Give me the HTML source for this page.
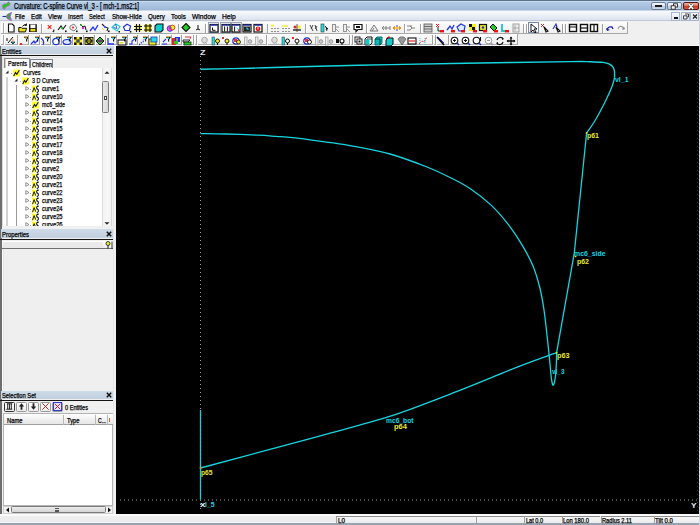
<!DOCTYPE html><html><head><meta charset="utf-8"><style>
*{box-sizing:border-box}
html,body{margin:0;padding:0;width:700px;height:525px;overflow:hidden;background:#f0f0f0;font-family:"Liberation Sans",sans-serif;position:relative}
.a{position:absolute}
.t{position:absolute;white-space:nowrap;transform-origin:0 0}
</style></head><body>
<div class="a" style="left:0px;top:0px;width:700px;height:11px;background:linear-gradient(#5e7088 0,#5e7088 1px,#cfe6f6 1px,#b4cbe6 2.5px,#9db7d6 10px,#cad8ea 10px,#cad8ea 11px)"></div>
<svg class="a" style="left:1px;top:1px;" width="10" height="9" viewBox="0 0 10 9"><path d="M1,4.5 L3.5,2.5 L5,3 L7.5,0.8 L9.3,2.5 L8,5 L5.5,5.5 L3.5,8.5 L1.8,7.5 Z" fill="#1ec81e" stroke="#d070d0" stroke-width="0.9"/></svg>
<div class="t" style="left:13.5px;top:2.1px;font-size:8.2px;line-height:9px;color:#000;font-weight:normal;transform:scaleX(0.721);-webkit-text-stroke:0.25px #000;">Curvature: C-spline Curve vl_3 - [ mch-1.ms2:1]</div>
<div class="a" style="left:651px;top:2px;width:15px;height:8px;border:1px solid #6d7f96;border-radius:2px;background:linear-gradient(#f4f8fc,#dce6f2 45%,#b8cae0 50%,#c8d8ec)"></div>
<div class="a" style="left:655px;top:4.8px;width:7px;height:2.6px;background:#fff;border:0.9px solid #1a1a1a"></div>
<div class="a" style="left:667px;top:2px;width:15px;height:8px;border:1px solid #6d7f96;border-radius:2px;background:linear-gradient(#f4f8fc,#dce6f2 45%,#b8cae0 50%,#c8d8ec)"></div>
<svg class="a" style="left:670px;top:2.5px;" width="9" height="7" viewBox="0 0 9 7"><rect x="3.5" y="0.8" width="4" height="3.2" fill="#fff" stroke="#222" stroke-width="0.9"/><rect x="1.2" y="2.8" width="4" height="3.4" fill="#fff" stroke="#222" stroke-width="0.9"/></svg>
<div class="a" style="left:683px;top:2px;width:16px;height:8px;border:1px solid #5b1a12;border-radius:2px;background:linear-gradient(#f4b8a8,#e07058 45%,#c83a22 50%,#d85a3a)"></div>
<svg class="a" style="left:686px;top:3px" width="10" height="7" viewBox="0 0 10 7"><path d="M2.8,1 L7.2,6 M7.2,1 L2.8,6" stroke="#333" stroke-width="2.6"/><path d="M2.8,1 L7.2,6 M7.2,1 L2.8,6" stroke="#fff" stroke-width="1.5"/></svg>
<div class="a" style="left:0px;top:11px;width:700px;height:10px;background:linear-gradient(#f8fafd,#eef2f8 40%,#dce3ef);border-bottom:1px solid #c0c8d6"></div>
<svg class="a" style="left:2px;top:11.5px;" width="11" height="9" viewBox="0 0 11 9"><path d="M9.5,0.5 Q4,2.5 4.2,4.5 Q4,6.8 9.5,8.5 Q6.8,4.5 9.5,0.5 Z" fill="#22c022" stroke="#b050d0" stroke-width="0.9"/><path d="M0.5,4.5 L4,4.5" stroke="#2233aa" stroke-width="1.1"/><circle cx="6.5" cy="4.5" r="0.9" fill="#c040c0"/></svg>
<div class="t" style="left:15px;top:12.6px;font-size:7.2px;line-height:8px;color:#000;font-weight:normal;transform:scaleX(0.845);-webkit-text-stroke:0.25px #000;">File</div>
<div class="t" style="left:31px;top:12.6px;font-size:7.2px;line-height:8px;color:#000;font-weight:normal;transform:scaleX(0.872);-webkit-text-stroke:0.25px #000;">Edit</div>
<div class="t" style="left:48px;top:12.6px;font-size:7.2px;line-height:8px;color:#000;font-weight:normal;transform:scaleX(0.893);-webkit-text-stroke:0.25px #000;">View</div>
<div class="t" style="left:68px;top:12.6px;font-size:7.2px;line-height:8px;color:#000;font-weight:normal;transform:scaleX(0.823);-webkit-text-stroke:0.25px #000;">Insert</div>
<div class="t" style="left:89px;top:12.6px;font-size:7.2px;line-height:8px;color:#000;font-weight:normal;transform:scaleX(0.791);-webkit-text-stroke:0.25px #000;">Select</div>
<div class="t" style="left:112px;top:12.6px;font-size:7.2px;line-height:8px;color:#000;font-weight:normal;transform:scaleX(0.848);-webkit-text-stroke:0.25px #000;">Show-Hide</div>
<div class="t" style="left:148px;top:12.6px;font-size:7.2px;line-height:8px;color:#000;font-weight:normal;transform:scaleX(0.858);-webkit-text-stroke:0.25px #000;">Query</div>
<div class="t" style="left:171px;top:12.6px;font-size:7.2px;line-height:8px;color:#000;font-weight:normal;transform:scaleX(0.882);-webkit-text-stroke:0.25px #000;">Tools</div>
<div class="t" style="left:192px;top:12.6px;font-size:7.2px;line-height:8px;color:#000;font-weight:normal;transform:scaleX(0.930);-webkit-text-stroke:0.25px #000;">Window</div>
<div class="t" style="left:222px;top:12.6px;font-size:7.2px;line-height:8px;color:#000;font-weight:normal;transform:scaleX(0.933);-webkit-text-stroke:0.25px #000;">Help</div>
<div class="a" style="left:671px;top:12px;width:9px;height:9px;border:1px solid #a9b6c8;background:linear-gradient(#f6f8fb,#dfe6ef)"></div>
<div class="a" style="left:681px;top:12px;width:9px;height:9px;border:1px solid #a9b6c8;background:linear-gradient(#f6f8fb,#dfe6ef)"></div>
<div class="a" style="left:690px;top:12px;width:9px;height:9px;border:1px solid #a9b6c8;background:linear-gradient(#f6f8fb,#dfe6ef)"></div>
<div class="a" style="left:674px;top:17px;width:4px;height:1.5px;background:#111"></div>
<svg class="a" style="left:682px;top:13px;" width="8" height="7" viewBox="0 0 8 7"><path d="M3,1 h3.5 v3 h-1 M1.5,2.8 h3.5 v3.2 h-3.5 z" fill="none" stroke="#333" stroke-width="0.9"/></svg>
<svg class="a" style="left:691px;top:13px;" width="8" height="7" viewBox="0 0 8 7"><path d="M2,1.5 L6,5.5 M6,1.5 L2,5.5" stroke="#222" stroke-width="1.3"/></svg>
<div class="a" style="left:0px;top:21px;width:700px;height:25px;background:#f0f0f0"></div>
<div class="a" style="left:1px;top:21.5px;width:627px;height:12px;background:linear-gradient(#fbfbfb,#f1f1f1);border-right:1px solid #a8a8a8;border-bottom:1px solid #a8a8a8;box-shadow:inset 1px 1px 0 #fff"></div>
<div class="a" style="left:1px;top:33.5px;width:517px;height:11.8px;background:linear-gradient(#fbfbfb,#f1f1f1);border-right:1px solid #a8a8a8;border-bottom:1px solid #b0b0b0;box-shadow:inset 1px 1px 0 #fff"></div>
<div class="a" style="left:0px;top:45.3px;width:700px;height:1px;background:#fafafa"></div>
<div class="a" style="left:2.5px;top:23px;width:1.2px;height:9.5px;background:#a8a8a8;box-shadow:1px 0 0 #fff"></div>
<div class="a" style="left:2.5px;top:35px;width:1.2px;height:9.5px;background:#a8a8a8;box-shadow:1px 0 0 #fff"></div>
<div class="a" style="left:207.5px;top:22.3px;width:11px;height:10.6px;border:1px solid #9aa6b8;background:rgba(255,255,255,0.35)"></div>
<div class="a" style="left:219.5px;top:22.3px;width:11px;height:10.6px;border:1px solid #9aa6b8;background:rgba(255,255,255,0.35)"></div>
<div class="a" style="left:230.5px;top:22.3px;width:11px;height:10.6px;border:1px solid #9aa6b8;background:rgba(255,255,255,0.35)"></div>
<div class="a" style="left:528px;top:22.3px;width:11px;height:10.6px;border:1px solid #7a8aa0;background:rgba(255,255,255,0.3)"></div>
<svg class="a" style="left:7px;top:23px;" width="10" height="10" viewBox="0 0 10 10"><path d="M1.5,1 h3.8 l1.8,1.8 v6.2 h-5.6 z" fill="#fff" stroke="#111" stroke-width="1.1"/></svg>
<svg class="a" style="left:17.5px;top:23px;" width="10" height="10" viewBox="0 0 10 10"><path d="M0.8,4.5 h2.5 l0.8,0.8 h4.5 l-1.2,3.6 h-6.6 z" fill="#f0e020" stroke="#111" stroke-width="1"/><path d="M4.5,3.5 q1.5,-2.5 4,-2" stroke="#111" fill="none" stroke-width="1"/><path d="M8.5,0.5 v2 h-2" stroke="#111" fill="none" stroke-width="0.9"/></svg>
<svg class="a" style="left:28px;top:23px;" width="10" height="10" viewBox="0 0 10 10"><rect x="1" y="1.2" width="7.8" height="7.8" fill="#111"/><rect x="2.4" y="1.6" width="5" height="3.4" fill="#fff"/><rect x="2.4" y="5.8" width="5" height="2.6" fill="#e8d820"/></svg>
<div class="a" style="left:41px;top:23.5px;width:1px;height:9px;background:#a0a0a0;box-shadow:1px 0 0 #fff"></div>
<svg class="a" style="left:46.5px;top:23px;" width="10" height="10" viewBox="0 0 10 10"><path d="M0.8,2.2 l3.6,3.6 M4.4,2.2 l-3.6,3.6" stroke="#e22" stroke-width="1.1"/><path d="M6.8,6.5 v1.5 l-1,1" stroke="#111" stroke-width="1.1" fill="none"/></svg>
<svg class="a" style="left:57px;top:23px;" width="10" height="10" viewBox="0 0 10 10"><path d="M1,7 l3,-4 l2,3 l3,-4" stroke="#111" fill="none" stroke-width="1.1"/><circle cx="5" cy="5" r="1.2" fill="#2c2"/><rect x="8" y="7.5" width="1.6" height="1.6" fill="#111"/></svg>
<svg class="a" style="left:67.5px;top:23px;" width="10" height="10" viewBox="0 0 10 10"><path d="M2,3 l4,-2 l3,4 l-3,3 l-4,-2 z" fill="#eee" stroke="#777" stroke-width="0.9"/><circle cx="5" cy="4.5" r="1.1" fill="#e33"/><rect x="8" y="7.5" width="1.6" height="1.6" fill="#111"/></svg>
<svg class="a" style="left:78px;top:23px;" width="10" height="10" viewBox="0 0 10 10"><path d="M2,1 l3,3 l2,-1 l1,4" stroke="#111" fill="none" stroke-width="1"/><circle cx="5" cy="5" r="1.2" fill="#d2d"/><circle cx="3" cy="2" r="0.9" fill="#2b2"/><rect x="8" y="7.5" width="1.6" height="1.6" fill="#111"/></svg>
<svg class="a" style="left:88.5px;top:23px;" width="10" height="10" viewBox="0 0 10 10"><path d="M1,8 l3,-4 l2,3 l3,-5" stroke="#23e" fill="none" stroke-width="1.3"/></svg>
<svg class="a" style="left:99.5px;top:23px;" width="10" height="10" viewBox="0 0 10 10"><path d="M2,1 l3,3 l3,1 l-1,3" stroke="#223" fill="none" stroke-width="1.1"/><circle cx="5" cy="4" r="1.1" fill="#36f"/><path d="M2,5 l2,2" stroke="#dd2" stroke-width="1"/><rect x="8" y="7.5" width="1.6" height="1.6" fill="#111"/></svg>
<svg class="a" style="left:110.5px;top:23px;" width="10" height="10" viewBox="0 0 10 10"><path d="M1,4.5 L4.5,1 L9,3.5 L6,8 Z" fill="#fff" stroke="#1cc" stroke-width="1.1"/><path d="M2.5,4.5 L6,5.5 L4.5,1" stroke="#23c" stroke-width="0.8" fill="none"/><rect x="7.5" y="8" width="1.5" height="1.5" fill="#111"/></svg>
<svg class="a" style="left:122px;top:23px;" width="10" height="10" viewBox="0 0 10 10"><path d="M1.5,4 L5,1.2 L8.5,3 L7.5,7.5 L3,7.5 Z" fill="#fff" stroke="#23c" stroke-width="1.2"/><rect x="7.8" y="8" width="1.5" height="1.5" fill="#111"/></svg>
<svg class="a" style="left:132.5px;top:23px;" width="10" height="10" viewBox="0 0 10 10"><path d="M2,2 h6 v6 h-6 z" fill="#f0e820"/><path d="M1,3.5 h8 M1,6.5 h8 M3.5,1 v8 M6.5,1 v8" stroke="#111" stroke-width="1.1"/></svg>
<svg class="a" style="left:143px;top:23px;" width="10" height="10" viewBox="0 0 10 10"><rect x="1.5" y="1.5" width="7" height="7" fill="#f0e820"/><path d="M1,3 h8 M1,7 h8 M3,1 v8 M7,1 v8" stroke="#111" stroke-width="1.1"/></svg>
<svg class="a" style="left:154px;top:23px;" width="10" height="10" viewBox="0 0 10 10"><path d="M1,3 l2,-2 h6 v6 l-2,2 h-6 z" fill="#1cc" stroke="#111" stroke-width="1.1"/></svg>
<svg class="a" style="left:165.5px;top:23px;" width="10" height="10" viewBox="0 0 10 10"><circle cx="4" cy="5.5" r="2.8" fill="#f4f" stroke="#23c" stroke-width="0.9"/><circle cx="6.5" cy="4.5" r="2.4" fill="#ee2" stroke="#c22" stroke-width="0.8"/><path d="M3,5 h3" stroke="#23c" stroke-width="0.8"/></svg>
<div class="a" style="left:178px;top:23.5px;width:1px;height:9px;background:#a0a0a0;box-shadow:1px 0 0 #fff"></div>
<svg class="a" style="left:180.5px;top:23px;" width="10" height="10" viewBox="0 0 10 10"><path d="M5,0.5 l4,4 l-4,4 l-4,-4 z" fill="#2c2" stroke="#111" stroke-width="1.1"/></svg>
<svg class="a" style="left:193px;top:23px;" width="10" height="10" viewBox="0 0 10 10"><path d="M5,2 v4 l-2,1 M5,6 l2,1" stroke="#111" fill="none" stroke-width="1"/></svg>
<div class="a" style="left:205px;top:23.5px;width:1px;height:9px;background:#a0a0a0;box-shadow:1px 0 0 #fff"></div>
<svg class="a" style="left:208.5px;top:23px;" width="10" height="10" viewBox="0 0 10 10"><rect x="1" y="1.5" width="8" height="7.5" fill="#fff" stroke="#111" stroke-width="1.2"/><rect x="1.5" y="1.5" width="7" height="1.3" fill="#2a3ab8"/><path d="M3.5,4.5 v2.8 h3" stroke="#111" fill="none" stroke-width="1"/></svg>
<svg class="a" style="left:220.5px;top:23px;" width="10" height="10" viewBox="0 0 10 10"><rect x="1" y="1.5" width="8" height="7.5" fill="#fff" stroke="#111" stroke-width="1.2"/><rect x="1.5" y="1.5" width="7" height="1.3" fill="#2a3ab8"/><path d="M3.6,3.5 v5 M6.4,3.5 v5" stroke="#111" stroke-width="1"/></svg>
<svg class="a" style="left:231px;top:23px;" width="10" height="10" viewBox="0 0 10 10"><rect x="1" y="1.5" width="8" height="7.5" fill="#fff" stroke="#111" stroke-width="1.2"/><rect x="1.5" y="1.5" width="7" height="1.3" fill="#2a3ab8"/><path d="M3.6,3.5 v5" stroke="#111" stroke-width="1"/><path d="M5,3.5 l3,3 h-1.5 l1,2 z" fill="#1dd"/><rect x="7" y="6.5" width="1.5" height="1.5" fill="#e22"/></svg>
<svg class="a" style="left:242px;top:23px;" width="10" height="10" viewBox="0 0 10 10"><rect x="1" y="1.5" width="8" height="7.5" fill="#fff" stroke="#111" stroke-width="1.2"/><rect x="1.5" y="1.5" width="7" height="1.3" fill="#2a3ab8"/><rect x="2" y="3.5" width="6" height="5" fill="#222"/><path d="M4.5,4 l3,2.5 h-3 z" fill="#2de"/></svg>
<svg class="a" style="left:252.5px;top:23px;" width="10" height="10" viewBox="0 0 10 10"><rect x="1" y="1.5" width="8" height="7.5" fill="#fff" stroke="#111" stroke-width="1.2"/><rect x="1.5" y="1.5" width="7" height="1.3" fill="#2a3ab8"/><circle cx="5" cy="5.8" r="2.4" fill="#e11"/><rect x="4.5" y="4.2" width="1" height="2.2" fill="#fff"/></svg>
<div class="a" style="left:266.5px;top:23.5px;width:1px;height:9px;background:#a0a0a0;box-shadow:1px 0 0 #fff"></div>
<svg class="a" style="left:270px;top:23px;" width="10" height="10" viewBox="0 0 10 10"><path d="M2,2 v1 M2,5 v1 M2,8 v1 M5,5 v1 M5,8 v1 M8,5 v1 M8,8 v1" stroke="#333" stroke-width="1"/><path d="M1,2.5 h3" stroke="#ee2" stroke-width="1.5"/></svg>
<svg class="a" style="left:281px;top:23px;" width="10" height="10" viewBox="0 0 10 10"><path d="M2,5 v1 M2,8 v1 M5,5 v1 M5,8 v1 M8,5 v1 M8,8 v1" stroke="#333" stroke-width="1"/><path d="M1,3 h6" stroke="#ee2" stroke-width="1.3"/></svg>
<svg class="a" style="left:291.5px;top:23px;" width="10" height="10" viewBox="0 0 10 10"><path d="M1,7 h8" stroke="#111" stroke-width="1.3"/><circle cx="3" cy="4" r="1.5" fill="#e22"/><rect x="5.5" y="2.5" width="3" height="3" fill="#ee2"/><path d="M5,1 v8" stroke="#333" stroke-width="0.8"/></svg>
<div class="a" style="left:305px;top:23.5px;width:1px;height:9px;background:#a0a0a0;box-shadow:1px 0 0 #fff"></div>
<svg class="a" style="left:308.5px;top:23px;" width="10" height="10" viewBox="0 0 10 10"><path d="M1,2 l3,6 M4,2 l-2,4 M6,2 l2,6 M8,3 l-2,3" stroke="#333" stroke-width="0.9" fill="none"/></svg>
<svg class="a" style="left:320px;top:23px;" width="10" height="10" viewBox="0 0 10 10"><rect x="1" y="1" width="3" height="8" fill="#2dd" stroke="#333" stroke-width="0.6"/><path d="M5,3 l3,3 l-2,0 l1,2" stroke="#111" fill="#111" stroke-width="0.8"/></svg>
<svg class="a" style="left:331px;top:23px;" width="10" height="10" viewBox="0 0 10 10"><rect x="1.5" y="1.5" width="3" height="7" fill="#eee" stroke="#888" stroke-width="0.9"/><path d="M5,4 h3 M5,6 l3,3" stroke="#888" stroke-width="0.9"/></svg>
<svg class="a" style="left:342px;top:23px;" width="10" height="10" viewBox="0 0 10 10"><rect x="1.5" y="1.5" width="3" height="7" fill="#eee" stroke="#888" stroke-width="0.9"/><path d="M5,4 h3 M5,6 l3,3" stroke="#888" stroke-width="0.9"/></svg>
<svg class="a" style="left:352.5px;top:23px;" width="10" height="10" viewBox="0 0 10 10"><path d="M1,1.5 h8 v5 h-4 l-2,2 v-2 h-2 z" fill="#fff" stroke="#111" stroke-width="1.2"/><rect x="3" y="3" width="4" height="2" fill="#111"/></svg>
<div class="a" style="left:366px;top:23.5px;width:1px;height:9px;background:#a0a0a0;box-shadow:1px 0 0 #fff"></div>
<svg class="a" style="left:369px;top:23px;" width="10" height="10" viewBox="0 0 10 10"><path d="M1,8 l4,-6 l4,6 z" fill="none" stroke="#777" stroke-width="1"/><path d="M3,8 l2,-3" stroke="#777"/></svg>
<svg class="a" style="left:380.5px;top:23px;" width="10" height="10" viewBox="0 0 10 10"><path d="M1,5 h8 M1,5 l2,-2 M1,5 l2,2 M5,3 v4 M9,3 v4" stroke="#777" stroke-width="0.9"/></svg>
<svg class="a" style="left:391.5px;top:23px;" width="10" height="10" viewBox="0 0 10 10"><path d="M1,5 h8" stroke="#e33" stroke-width="1.2"/><path d="M1,5 l2,-2 M1,5 l2,2 M9,5 l-2,-2 M9,5 l-2,2" stroke="#f80" stroke-width="0.9"/><path d="M5,2 v6" stroke="#33c" stroke-width="0.9"/><rect x="3" y="4.2" width="4" height="1.6" fill="#ee2"/></svg>
<div class="a" style="left:404px;top:23.5px;width:1px;height:9px;background:#a0a0a0;box-shadow:1px 0 0 #fff"></div>
<svg class="a" style="left:406px;top:23px;" width="10" height="10" viewBox="0 0 10 10"><path d="M1,3 h3 l2,2 h3 M1,7 h3 l2,-2 M5,2 v2" stroke="#777" stroke-width="0.9" fill="none"/></svg>
<div class="a" style="left:420px;top:23.5px;width:1px;height:9px;background:#a0a0a0;box-shadow:1px 0 0 #fff"></div>
<svg class="a" style="left:423px;top:23px;" width="10" height="10" viewBox="0 0 10 10"><rect x="1" y="1" width="8" height="8" fill="#ccc" stroke="#555" stroke-width="0.8"/><path d="M1,3.5 h8 M1,6 h8" stroke="#555" stroke-width="0.8"/></svg>
<svg class="a" style="left:435px;top:23px;" width="10" height="10" viewBox="0 0 10 10"><path d="M1,1 l3,3 M4,1 l-3,3" stroke="#e11" stroke-width="1"/><path d="M3,4 v4 h2" stroke="#111" stroke-width="0.9" fill="none"/><rect x="5" y="7" width="4" height="2.4" fill="#e11"/></svg>
<svg class="a" style="left:445.5px;top:23px;" width="10" height="10" viewBox="0 0 10 10"><path d="M1,7 l3,-4 l2,3 l2,-4" stroke="#23d" fill="none" stroke-width="1.3"/><rect x="5" y="7" width="4" height="2.4" fill="#e11"/></svg>
<svg class="a" style="left:456px;top:23px;" width="10" height="10" viewBox="0 0 10 10"><path d="M1,4 l4,-3 l4,2 l-1,5 l-5,0 z" fill="#ddeeff" stroke="#23c" stroke-width="1.2"/><rect x="5" y="7" width="4" height="2.4" fill="#e11"/></svg>
<svg class="a" style="left:467.5px;top:23px;" width="10" height="10" viewBox="0 0 10 10"><rect x="1" y="1" width="7" height="7" fill="#ee2"/><path d="M1,1 h3 v3 h-3z M4,4 h3 v3 h-3z" fill="#111"/><rect x="5" y="7" width="4" height="2.4" fill="#e11"/></svg>
<svg class="a" style="left:478px;top:23px;" width="10" height="10" viewBox="0 0 10 10"><rect x="1.5" y="1.5" width="7" height="6" fill="#ee2" stroke="#111" stroke-width="1.2"/><circle cx="5" cy="4.5" r="1.3" fill="#23c"/><rect x="5" y="7" width="4" height="2.4" fill="#e11"/></svg>
<svg class="a" style="left:489px;top:23px;" width="10" height="10" viewBox="0 0 10 10"><path d="M1,4 l3,-3 l4,4 l-3,3 z" fill="#2c2" stroke="#111" stroke-width="1"/><rect x="5" y="7" width="4" height="2.4" fill="#e11"/></svg>
<svg class="a" style="left:500px;top:23px;" width="10" height="10" viewBox="0 0 10 10"><path d="M2,1 v7 h3" stroke="#1cc" stroke-width="1.8" fill="none"/><rect x="5" y="7" width="4" height="2.4" fill="#e11"/></svg>
<svg class="a" style="left:511px;top:23px;" width="10" height="10" viewBox="0 0 10 10"><rect x="2" y="1" width="6" height="8" fill="#eee" stroke="#999" stroke-width="0.9"/><path d="M4,2 v6 M2,5 h6" stroke="#999" stroke-width="0.8"/></svg>
<div class="a" style="left:523px;top:23.5px;width:1px;height:9px;background:#a0a0a0;box-shadow:1px 0 0 #fff"></div>
<div class="a" style="left:526px;top:23.5px;width:1px;height:9px;background:#a0a0a0;box-shadow:1px 0 0 #fff"></div>
<svg class="a" style="left:529px;top:23px;" width="10" height="10" viewBox="0 0 10 10"><path d="M2,1 v8 l2,-2 l2,3 l1,-1 l-2,-3 h3 z" fill="#fff" stroke="#111" stroke-width="1"/></svg>
<svg class="a" style="left:540px;top:23px;" width="10" height="10" viewBox="0 0 10 10"><path d="M1,1 l3,3 M4,1 l-3,3" stroke="#e11" stroke-width="0.9"/><path d="M4,4 l4,4 l-2,1 z" fill="#fff" stroke="#111" stroke-width="1.1"/></svg>
<svg class="a" style="left:551.5px;top:23px;" width="10" height="10" viewBox="0 0 10 10"><path d="M1,6 l3,-5 l1,3" stroke="#23d" fill="none" stroke-width="1.1"/><path d="M4,4 l4,4 l-2,1 z" fill="#fff" stroke="#111" stroke-width="1.1"/></svg>
<div class="a" style="left:561.5px;top:23.5px;width:1px;height:9px;background:#a0a0a0;box-shadow:1px 0 0 #fff"></div>
<div class="a" style="left:565px;top:23.5px;width:1px;height:9px;background:#a0a0a0;box-shadow:1px 0 0 #fff"></div>
<svg class="a" style="left:567.5px;top:23px;" width="10" height="10" viewBox="0 0 10 10"><rect x="1.5" y="1.5" width="7" height="7" fill="#fff" stroke="#111" stroke-width="1.4"/><path d="M1.5,4 h7" stroke="#111"/></svg>
<svg class="a" style="left:578.5px;top:23px;" width="10" height="10" viewBox="0 0 10 10"><rect x="1.5" y="1.5" width="7" height="7" fill="#fff" stroke="#111" stroke-width="1.4"/><path d="M1.5,5 h7" stroke="#111" stroke-width="1.2"/></svg>
<svg class="a" style="left:589px;top:23px;" width="10" height="10" viewBox="0 0 10 10"><rect x="1.5" y="1.5" width="7" height="7" fill="#fff" stroke="#111" stroke-width="1.4"/><path d="M5,1.5 v7" stroke="#111" stroke-width="1.2"/></svg>
<div class="a" style="left:601.5px;top:23.5px;width:1px;height:9px;background:#a0a0a0;box-shadow:1px 0 0 #fff"></div>
<svg class="a" style="left:604.5px;top:23px;" width="10" height="10" viewBox="0 0 10 10"><path d="M2,7 q1,-4 5,-3 l1,2" stroke="#22a" fill="none" stroke-width="1.3"/><path d="M1,5 l1,3 l3,-1 z" fill="#22a"/></svg>
<svg class="a" style="left:615.5px;top:23px;" width="10" height="10" viewBox="0 0 10 10"><path d="M2,6 q1,-4 5,-2 l0,2" stroke="#999" fill="none" stroke-width="1.1"/><path d="M6,7 l3,-1 l-1,-2 z" fill="#777"/></svg>
<svg class="a" style="left:6px;top:35.5px;" width="10" height="10" viewBox="0 0 10 10"><path d="M1,2 v3 M2,7 l5,-6" stroke="#111" stroke-width="1"/><path d="M5,6 h4 l-2,2 z" fill="#1cd" stroke="#111" stroke-width="0.7"/><path d="M6,4 h2" stroke="#f90" stroke-width="1"/></svg>
<div class="a" style="left:16.5px;top:35px;width:1px;height:10px;background:#a0a0a0;box-shadow:1px 0 0 #fff"></div>
<svg class="a" style="left:18.5px;top:35.5px;" width="10" height="10" viewBox="0 0 10 10"><path d="M5,1.2 h4.2 l-1.6,2.2 v2.2" stroke="#111" stroke-width="1.1" fill="none"/><rect x="6.4" y="1.6" width="1.6" height="1.4" fill="#1de"/><path d="M5.5,0.6 h3" stroke="#f90" stroke-width="0.7"/><path d="M1,7 l2,2 M3,7 l-2,2" stroke="#e22" stroke-width="1"/><path d="M6,2 h2" stroke="#f90"/></svg>
<div class="a" style="left:27.5px;top:35px;width:1px;height:10px;background:#a0a0a0;box-shadow:1px 0 0 #fff"></div>
<svg class="a" style="left:29.5px;top:35.5px;" width="10" height="10" viewBox="0 0 10 10"><path d="M1,8 l3,-3 l1,2 l3,-3" stroke="#23e" fill="none" stroke-width="1.2"/><path d="M5,1.2 h4.2 l-1.6,2.2 v2.2" stroke="#111" stroke-width="1.1" fill="none"/><rect x="6.4" y="1.6" width="1.6" height="1.4" fill="#1de"/><path d="M5.5,0.6 h3" stroke="#f90" stroke-width="0.7"/></svg>
<div class="a" style="left:38.6px;top:35px;width:1px;height:10px;background:#a0a0a0;box-shadow:1px 0 0 #fff"></div>
<svg class="a" style="left:40px;top:35.5px;" width="10" height="10" viewBox="0 0 10 10"><path d="M1,2 q4,3 2,7" stroke="#23e" fill="none" stroke-width="1.2"/><path d="M5,1.2 h4.2 l-1.6,2.2 v2.2" stroke="#111" stroke-width="1.1" fill="none"/><rect x="6.4" y="1.6" width="1.6" height="1.4" fill="#1de"/><path d="M5.5,0.6 h3" stroke="#f90" stroke-width="0.7"/><path d="M1,5 l2,2" stroke="#dd4" stroke-width="0.9"/></svg>
<div class="a" style="left:49.5px;top:35px;width:1px;height:10px;background:#a0a0a0;box-shadow:1px 0 0 #fff"></div>
<svg class="a" style="left:50.5px;top:35.5px;" width="10" height="10" viewBox="0 0 10 10"><circle cx="5" cy="5.5" r="3.2" fill="#fff" stroke="#23c" stroke-width="1.3"/><path d="M5,1.2 h4.2 l-1.6,2.2 v2.2" stroke="#111" stroke-width="1.1" fill="none"/><rect x="6.4" y="1.6" width="1.6" height="1.4" fill="#1de"/><path d="M5.5,0.6 h3" stroke="#f90" stroke-width="0.7"/></svg>
<div class="a" style="left:60.5px;top:35px;width:1px;height:10px;background:#a0a0a0;box-shadow:1px 0 0 #fff"></div>
<svg class="a" style="left:61.5px;top:35.5px;" width="10" height="10" viewBox="0 0 10 10"><ellipse cx="5" cy="6" rx="4" ry="2.5" fill="#dbe7ff" stroke="#23c" stroke-width="1.2"/><path d="M5,1.2 h4.2 l-1.6,2.2 v2.2" stroke="#111" stroke-width="1.1" fill="none"/><rect x="6.4" y="1.6" width="1.6" height="1.4" fill="#1de"/><path d="M5.5,0.6 h3" stroke="#f90" stroke-width="0.7"/></svg>
<div class="a" style="left:71.5px;top:35px;width:1px;height:10px;background:#a0a0a0;box-shadow:1px 0 0 #fff"></div>
<svg class="a" style="left:72.5px;top:35.5px;" width="10" height="10" viewBox="0 0 10 10"><rect x="1" y="1" width="8" height="8" fill="#f0e820"/><path d="M1,1 h2.5 v2.5 h-2.5z M6.5,1 h2.5 v2.5 h-2.5z M1,6.5 h2.5 v2.5 h-2.5z M6.5,6.5 h2.5 v2.5 h-2.5z M3.5,3.5 h3 v3 h-3z" fill="#111"/><rect x="4.2" y="4.2" width="1.6" height="1.6" fill="#36f"/></svg>
<div class="a" style="left:82.5px;top:35px;width:1px;height:10px;background:#a0a0a0;box-shadow:1px 0 0 #fff"></div>
<svg class="a" style="left:83.5px;top:35.5px;" width="10" height="10" viewBox="0 0 10 10"><rect x="1" y="1.5" width="8" height="7" fill="#f0e820" stroke="#111" stroke-width="0.9"/><circle cx="5" cy="5" r="2.3" fill="none" stroke="#111" stroke-width="1.2"/><path d="M1,5 h8" stroke="#111" stroke-width="0.9"/></svg>
<div class="a" style="left:93.5px;top:35px;width:1px;height:10px;background:#a0a0a0;box-shadow:1px 0 0 #fff"></div>
<svg class="a" style="left:94.5px;top:35.5px;" width="10" height="10" viewBox="0 0 10 10"><path d="M1,5 l4,-4 l4,4 l-4,4 z" fill="#2c2" stroke="#111" stroke-width="1"/><circle cx="5" cy="5" r="1.5" fill="#d3d"/><path d="M1,5 h8" stroke="#111" stroke-width="0.8"/></svg>
<div class="a" style="left:104.5px;top:35px;width:1px;height:10px;background:#a0a0a0;box-shadow:1px 0 0 #fff"></div>
<svg class="a" style="left:105.5px;top:35.5px;" width="10" height="10" viewBox="0 0 10 10"><path d="M2,2 v6 h6" stroke="#23e" fill="none" stroke-width="1.3"/><path d="M5,1.2 h4.2 l-1.6,2.2 v2.2" stroke="#111" stroke-width="1.1" fill="none"/><rect x="6.4" y="1.6" width="1.6" height="1.4" fill="#1de"/><path d="M5.5,0.6 h3" stroke="#f90" stroke-width="0.7"/></svg>
<div class="a" style="left:115.5px;top:35px;width:1px;height:10px;background:#a0a0a0;box-shadow:1px 0 0 #fff"></div>
<svg class="a" style="left:116.5px;top:35.5px;" width="10" height="10" viewBox="0 0 10 10"><rect x="1" y="4" width="8" height="5" fill="#fff" stroke="#111" stroke-width="1.1"/><path d="M5,1.2 h4.2 l-1.6,2.2 v2.2" stroke="#111" stroke-width="1.1" fill="none"/><rect x="6.4" y="1.6" width="1.6" height="1.4" fill="#1de"/><path d="M5.5,0.6 h3" stroke="#f90" stroke-width="0.7"/><rect x="2.5" y="6" width="4" height="1.5" fill="#dd2"/></svg>
<div class="a" style="left:126.5px;top:35px;width:1px;height:10px;background:#a0a0a0;box-shadow:1px 0 0 #fff"></div>
<svg class="a" style="left:127.5px;top:35.5px;" width="10" height="10" viewBox="0 0 10 10"><path d="M1,8 h3 v-3 l4,-3" stroke="#23e" fill="none" stroke-width="1.1"/><path d="M5,1.2 h4.2 l-1.6,2.2 v2.2" stroke="#111" stroke-width="1.1" fill="none"/><rect x="6.4" y="1.6" width="1.6" height="1.4" fill="#1de"/><path d="M5.5,0.6 h3" stroke="#f90" stroke-width="0.7"/></svg>
<div class="a" style="left:137px;top:35px;width:1px;height:10px;background:#a0a0a0;box-shadow:1px 0 0 #fff"></div>
<svg class="a" style="left:138px;top:35.5px;" width="10" height="10" viewBox="0 0 10 10"><path d="M1,9 l2,-2 l2,-1 l1,-3" stroke="#23e" fill="none" stroke-width="1.1" stroke-dasharray="1.5 1"/><path d="M5,1.2 h4.2 l-1.6,2.2 v2.2" stroke="#111" stroke-width="1.1" fill="none"/><rect x="6.4" y="1.6" width="1.6" height="1.4" fill="#1de"/><path d="M5.5,0.6 h3" stroke="#f90" stroke-width="0.7"/></svg>
<div class="a" style="left:147.5px;top:35px;width:1px;height:10px;background:#a0a0a0;box-shadow:1px 0 0 #fff"></div>
<svg class="a" style="left:148px;top:35.5px;" width="10" height="10" viewBox="0 0 10 10"><rect x="1" y="3" width="7" height="6" fill="#ee2" stroke="#111" stroke-width="0.8"/><rect x="3" y="1" width="6" height="5" fill="#2dd" stroke="#23c" stroke-width="0.8"/></svg>
<div class="a" style="left:159px;top:35px;width:1px;height:10px;background:#a0a0a0;box-shadow:1px 0 0 #fff"></div>
<svg class="a" style="left:160.5px;top:35.5px;" width="10" height="10" viewBox="0 0 10 10"><path d="M1,8 h5 M2,6 l3,-3" stroke="#23e" stroke-width="1.1"/><path d="M5,1.2 h4.2 l-1.6,2.2 v2.2" stroke="#111" stroke-width="1.1" fill="none"/><rect x="6.4" y="1.6" width="1.6" height="1.4" fill="#1de"/><path d="M5.5,0.6 h3" stroke="#f90" stroke-width="0.7"/></svg>
<div class="a" style="left:170.5px;top:35px;width:1px;height:10px;background:#a0a0a0;box-shadow:1px 0 0 #fff"></div>
<svg class="a" style="left:171px;top:35.5px;" width="10" height="10" viewBox="0 0 10 10"><rect x="1" y="2" width="4" height="7" fill="#e22"/><rect x="4" y="1" width="5" height="5" fill="#23e"/><rect x="3" y="5" width="4" height="3" fill="#2c2"/><path d="M6,2 v3" stroke="#ee2"/></svg>
<div class="a" style="left:180.5px;top:35px;width:1px;height:10px;background:#a0a0a0;box-shadow:1px 0 0 #fff"></div>
<svg class="a" style="left:181.5px;top:35.5px;" width="10" height="10" viewBox="0 0 10 10"><path d="M1,4 h7 l-2,2 h-5 z" fill="#fff" stroke="#111" stroke-width="0.9"/><rect x="2" y="6" width="7" height="3" fill="#2c2" stroke="#111" stroke-width="0.7"/><path d="M3,1 h6 l-1,2" stroke="#d22" stroke-width="0.9" fill="none"/></svg>
<div class="a" style="left:193px;top:35px;width:1px;height:10px;background:#a0a0a0;box-shadow:1px 0 0 #fff"></div>
<div class="a" style="left:196px;top:35px;width:1px;height:10px;background:#a0a0a0;box-shadow:1px 0 0 #fff"></div>
<svg class="a" style="left:199.5px;top:35.5px;" width="10" height="10" viewBox="0 0 10 10"><circle cx="4.5" cy="4" r="2.8" fill="#ddd" stroke="#999" stroke-width="0.8"/><path d="M4,7 v2 M6,7 l1,2" stroke="#aaa" stroke-width="0.9"/></svg>
<svg class="a" style="left:210.5px;top:35.5px;" width="10" height="10" viewBox="0 0 10 10"><rect x="1" y="1" width="2.5" height="8" fill="#2dd" stroke="#333" stroke-width="0.5"/><circle cx="6.5" cy="5" r="2" fill="#ee2" stroke="#111" stroke-width="0.9"/><path d="M6.5,7 v2" stroke="#111"/></svg>
<svg class="a" style="left:221px;top:35.5px;" width="10" height="10" viewBox="0 0 10 10"><path d="M1,1 l2,2 M3,1 l-2,2" stroke="#e11" stroke-width="0.9"/><circle cx="6" cy="5" r="2" fill="#ee2" stroke="#111" stroke-width="0.9"/><path d="M6,7 v2" stroke="#111"/></svg>
<svg class="a" style="left:232px;top:35.5px;" width="10" height="10" viewBox="0 0 10 10"><circle cx="4" cy="5" r="3.2" fill="#fff" stroke="#23c" stroke-width="1.2"/><rect x="2" y="3" width="3" height="3" fill="#e33"/><circle cx="6.5" cy="6" r="2" fill="#ee2" stroke="#111" stroke-width="0.8"/></svg>
<svg class="a" style="left:243px;top:35.5px;" width="10" height="10" viewBox="0 0 10 10"><rect x="1.5" y="1" width="2.5" height="8" fill="#eee" stroke="#999" stroke-width="0.7"/><circle cx="7" cy="5.5" r="1.8" fill="#ccc" stroke="#888" stroke-width="0.8"/></svg>
<svg class="a" style="left:253.5px;top:35.5px;" width="10" height="10" viewBox="0 0 10 10"><rect x="1.5" y="1" width="2.5" height="8" fill="#eee" stroke="#999" stroke-width="0.7"/><circle cx="7" cy="5.5" r="1.8" fill="#ccc" stroke="#888" stroke-width="0.8"/></svg>
<div class="a" style="left:266px;top:35px;width:1px;height:10px;background:#a0a0a0;box-shadow:1px 0 0 #fff"></div>
<svg class="a" style="left:270px;top:35.5px;" width="10" height="10" viewBox="0 0 10 10"><circle cx="4.5" cy="4" r="2.8" fill="#ddd" stroke="#999" stroke-width="0.8"/><path d="M4,7 v2 M6,7 l1,2" stroke="#aaa" stroke-width="0.9"/></svg>
<svg class="a" style="left:280.5px;top:35.5px;" width="10" height="10" viewBox="0 0 10 10"><rect x="1" y="1" width="2.5" height="8" fill="#2dd" stroke="#333" stroke-width="0.5"/><circle cx="6.5" cy="5" r="2" fill="#fff" stroke="#111" stroke-width="1"/><path d="M6.5,7 v2" stroke="#111"/></svg>
<svg class="a" style="left:291px;top:35.5px;" width="10" height="10" viewBox="0 0 10 10"><path d="M1,1 l2,2 M3,1 l-2,2" stroke="#e11" stroke-width="0.9"/><circle cx="6" cy="5" r="2" fill="#fff" stroke="#111" stroke-width="1"/><path d="M6,7 v2" stroke="#111"/></svg>
<svg class="a" style="left:302.5px;top:35.5px;" width="10" height="10" viewBox="0 0 10 10"><circle cx="4" cy="5" r="3.2" fill="#fff" stroke="#23c" stroke-width="1.2"/><rect x="2" y="3" width="3" height="3" fill="#e33"/><circle cx="6.5" cy="6" r="2" fill="#fff" stroke="#111" stroke-width="0.9"/></svg>
<svg class="a" style="left:314px;top:35.5px;" width="10" height="10" viewBox="0 0 10 10"><rect x="1.5" y="1" width="2.5" height="8" fill="#eee" stroke="#999" stroke-width="0.7"/><circle cx="7" cy="5.5" r="1.8" fill="#ccc" stroke="#888" stroke-width="0.8"/></svg>
<svg class="a" style="left:324px;top:35.5px;" width="10" height="10" viewBox="0 0 10 10"><rect x="1.5" y="1" width="2.5" height="8" fill="#eee" stroke="#999" stroke-width="0.7"/><circle cx="7" cy="5.5" r="1.8" fill="#ccc" stroke="#888" stroke-width="0.8"/></svg>
<svg class="a" style="left:335px;top:35.5px;" width="10" height="10" viewBox="0 0 10 10"><rect x="1" y="3" width="3" height="4" fill="#111"/><circle cx="7" cy="5" r="2" fill="#fff" stroke="#111" stroke-width="1.1"/><path d="M7,7 v2" stroke="#111"/></svg>
<div class="a" style="left:349px;top:35px;width:1px;height:10px;background:#a0a0a0;box-shadow:1px 0 0 #fff"></div>
<div class="a" style="left:351.5px;top:35px;width:1px;height:10px;background:#a0a0a0;box-shadow:1px 0 0 #fff"></div>
<svg class="a" style="left:353.5px;top:35.5px;" width="10" height="10" viewBox="0 0 10 10"><rect x="1" y="1" width="5" height="5" fill="#fff" stroke="#111" stroke-width="0.9"/><rect x="3" y="3" width="5" height="5" fill="#fff" stroke="#111" stroke-width="0.9"/><rect x="4.5" y="4.5" width="2" height="2" fill="#111"/></svg>
<svg class="a" style="left:363.5px;top:35.5px;" width="10" height="10" viewBox="0 0 10 10"><path d="M1,3 l2,-2 h5 v6 l-2,2 h-5 z" fill="#fff" stroke="#111" stroke-width="1"/><path d="M3,3 h5 M3,3 v6" stroke="#111" stroke-width="0.8"/><rect x="1.5" y="3.5" width="4" height="5" fill="#1cc"/></svg>
<svg class="a" style="left:374px;top:35.5px;" width="10" height="10" viewBox="0 0 10 10"><path d="M1,3 l2,-2 h5 v6 l-2,2 h-5 z" fill="#1bb" stroke="#066" stroke-width="0.9"/><path d="M1,3 h5 v6" stroke="#111" stroke-width="0.8" fill="none"/></svg>
<svg class="a" style="left:385px;top:35.5px;" width="10" height="10" viewBox="0 0 10 10"><path d="M1,4 l2,-2 h5 v6 l-2,2 h-5 z" fill="#1cc" stroke="#111" stroke-width="1"/><path d="M1,3 l2,-2 h2" stroke="#e22" stroke-width="1"/></svg>
<svg class="a" style="left:396.5px;top:35.5px;" width="10" height="10" viewBox="0 0 10 10"><path d="M1,3 l2,-2 h4 l2,2 l-4,6 z" fill="#999" stroke="#666" stroke-width="0.8"/></svg>
<svg class="a" style="left:406.5px;top:35.5px;" width="10" height="10" viewBox="0 0 10 10"><rect x="1" y="2" width="8" height="6" fill="#fff" stroke="#111" stroke-width="1.1"/><path d="M2,5 h6" stroke="#e22" stroke-width="1.2"/></svg>
<svg class="a" style="left:418px;top:35.5px;" width="10" height="10" viewBox="0 0 10 10"><path d="M1,8 l3,-3 l2,1 l3,-5" stroke="#e22" stroke-width="1" stroke-dasharray="1.2 0.8" fill="none"/><path d="M2,2 v7 M7,2 v7" stroke="#2ad" stroke-width="0.9" stroke-dasharray="1 1"/></svg>
<div class="a" style="left:432px;top:35px;width:1px;height:10px;background:#a0a0a0;box-shadow:1px 0 0 #fff"></div>
<div class="a" style="left:434.6px;top:35px;width:1px;height:10px;background:#a0a0a0;box-shadow:1px 0 0 #fff"></div>
<svg class="a" style="left:436px;top:35.5px;" width="10" height="10" viewBox="0 0 10 10"><path d="M1,1 l7,8" stroke="#111" stroke-width="1.6"/><path d="M2,1 l6,6" stroke="#23e" stroke-width="1"/></svg>
<div class="a" style="left:447.7px;top:35px;width:1px;height:10px;background:#a0a0a0;box-shadow:1px 0 0 #fff"></div>
<svg class="a" style="left:450px;top:35.5px;" width="10" height="10" viewBox="0 0 10 10"><circle cx="4.5" cy="4.5" r="3.3" fill="#fff" stroke="#111" stroke-width="1.1"/><path d="M3,4.5 h3 M4.5,3 v3" stroke="#111" stroke-width="0.9"/><path d="M7,7 l2,2" stroke="#23c" stroke-width="1.4"/></svg>
<svg class="a" style="left:461px;top:35.5px;" width="10" height="10" viewBox="0 0 10 10"><circle cx="4.5" cy="4.5" r="3.3" fill="#fff" stroke="#111" stroke-width="1.1"/><path d="M3,4.5 h3 M4.5,3 v3" stroke="#111" stroke-width="1"/><path d="M7,7 l2,2" stroke="#23c" stroke-width="1.4"/></svg>
<svg class="a" style="left:472px;top:35.5px;" width="10" height="10" viewBox="0 0 10 10"><circle cx="4.5" cy="4.5" r="3.3" fill="#fff" stroke="#111" stroke-width="1.1"/><path d="M7,7 l2,2" stroke="#23c" stroke-width="1.4"/><path d="M8.5,1 v4" stroke="#111" stroke-width="1"/></svg>
<svg class="a" style="left:483.5px;top:35.5px;" width="10" height="10" viewBox="0 0 10 10"><circle cx="4.5" cy="4.5" r="3.3" fill="#fff" stroke="#999" stroke-width="1"/><path d="M3,4.5 h3" stroke="#999"/><path d="M7,7 l2,2" stroke="#999" stroke-width="1.3"/></svg>
<svg class="a" style="left:494.5px;top:35.5px;" width="10" height="10" viewBox="0 0 10 10"><path d="M2,4 a3.3,3.3 0 0 1 6,-1 M8,6 a3.3,3.3 0 0 1 -6,1" stroke="#111" fill="none" stroke-width="1.2"/><path d="M7,1 l2,2 l-2,1 z M3,9 l-2,-2 l2,-1 z" fill="#111"/></svg>
<svg class="a" style="left:505.5px;top:35.5px;" width="10" height="10" viewBox="0 0 10 10"><path d="M5,1 v8 M1,5 h8" stroke="#111" stroke-width="1.3"/><path d="M5,0.5 l-1.5,2 h3z M5,9.5 l-1.5,-2 h3z M0.5,5 l2,-1.5 v3z M9.5,5 l-2,-1.5 v3z" fill="#111"/></svg>
<div class="a" style="left:0px;top:46px;width:116px;height:468px;background:#f0f0f0"></div>
<div class="a" style="left:0px;top:46px;width:1.6px;height:468px;background:#6e6e6e"></div>
<div class="a" style="left:1px;top:46.2px;width:113px;height:8.2px;background:linear-gradient(#cddae7,#c2d0df)"></div>
<div class="t" style="left:2.3px;top:48.0px;font-size:7.4px;line-height:8px;color:#000;font-weight:normal;transform:scaleX(0.804);-webkit-text-stroke:0.25px #000;">Entities</div>
<svg class="a" style="left:105.5px;top:47.5px;" width="6" height="6" viewBox="0 0 6 6"><path d="M0.8,0.8 L5.2,5.2 M5.2,0.8 L0.8,5.2" stroke="#111" stroke-width="1.5"/></svg>
<div class="a" style="left:0px;top:55.1px;width:113px;height:1.1px;background:#151515"></div>
<div class="a" style="left:1.6px;top:57px;width:112px;height:11.2px;background:#f0f0f0"></div>
<div class="a" style="left:2.4px;top:68px;width:110px;height:158px;background:#fff"></div>
<div class="a" style="left:2.4px;top:57.2px;width:1px;height:169px;background:#dcdcdc"></div>
<div class="a" style="left:2.4px;top:57.2px;width:110px;height:0.8px;background:#e4e4e4"></div>
<div class="a" style="left:3.5px;top:58.3px;width:26px;height:10.2px;background:#fff;border:1px solid #8a8a8a;border-bottom:none;border-radius:1px 1px 0 0"></div>
<div class="a" style="left:4.5px;top:59.3px;width:1.2px;height:9px;background:#cfcfcf"></div>
<div class="t" style="left:8px;top:60px;font-size:6.9px;line-height:8px;color:#000;font-weight:normal;transform:scaleX(0.800);-webkit-text-stroke:0.25px #000;">Parents</div>
<div class="a" style="left:29.5px;top:59.3px;width:23.5px;height:9px;background:#f4f4f4;border:1px solid #7a8090;border-bottom:none"></div>
<div class="t" style="left:31.5px;top:60.8px;font-size:6.9px;line-height:8px;color:#000;font-weight:normal;transform:scaleX(0.779);-webkit-text-stroke:0.25px #000;">Children</div>
<div class="a" style="left:6px;top:77px;width:2px;height:150px;background:#d2d2d2"></div>
<div class="a" style="left:16px;top:85px;width:0.9px;height:142px;background:#9a9a9a"></div>
<svg class="a" style="left:5px;top:70px;" width="4" height="4" viewBox="0 0 4 4"><path d="M3.5,0.5 V3.5 H0.5 Z" fill="#222"/></svg>
<div class="a" style="left:10.5px;top:72.5px;width:0.9px;height:0.9px;background:#9ab"></div>
<svg class="a" style="left:13px;top:68.7px;" width="7" height="8" viewBox="0 0 7 8"><rect x="0" y="0.5" width="7" height="7" fill="#ffff30"/><path d="M0.7,7 L2.5,3.5 L3.8,5.2 L6.3,1.2" stroke="#111" stroke-width="1.1" fill="none"/><path d="M1.6,5.6 L2.4,4.2" stroke="#2030d0" stroke-width="0.8"/></svg>
<div class="t" style="left:23px;top:69.0px;font-size:7.2px;line-height:8px;color:#000;font-weight:normal;transform:scaleX(0.768);-webkit-text-stroke:0.25px #000;">Curves</div>
<svg class="a" style="left:14px;top:78px;" width="4" height="4" viewBox="0 0 4 4"><path d="M3.5,0.5 V3.5 H0.5 Z" fill="#222"/></svg>
<div class="a" style="left:19.5px;top:80.5px;width:0.9px;height:0.9px;background:#9ab"></div>
<svg class="a" style="left:22px;top:76.7px;" width="7" height="8" viewBox="0 0 7 8"><rect x="0" y="0.5" width="7" height="7" fill="#ffff30"/><path d="M0.7,7 L2.5,3.5 L3.8,5.2 L6.3,1.2" stroke="#111" stroke-width="1.1" fill="none"/><path d="M1.6,5.6 L2.4,4.2" stroke="#2030d0" stroke-width="0.8"/></svg>
<div class="t" style="left:32px;top:77.0px;font-size:7.2px;line-height:8px;color:#000;font-weight:normal;transform:scaleX(0.765);-webkit-text-stroke:0.25px #000;">3 D Curves</div>
<svg class="a" style="left:24.5px;top:86.2px;" width="5" height="5" viewBox="0 0 5 5"><path d="M0.8,0.6 L4,2.5 L0.8,4.4 Z" fill="#fff" stroke="#777" stroke-width="0.8"/></svg>
<div class="a" style="left:29.5px;top:88.5px;width:0.9px;height:0.9px;background:#9ab"></div>
<svg class="a" style="left:31.5px;top:84.7px;" width="7" height="8" viewBox="0 0 7 8"><rect x="0" y="0.6" width="4.2" height="6.8" fill="#ffff30"/><path d="M0.5,7.2 L2.1,2.6 L3.7,6.6" stroke="#1a1a40" stroke-width="1.0" fill="none"/><path d="M6.8,1.2 C4.6,0.8 3.9,3.2 5.5,4.3 C7,5.2 6.6,7.2 4.8,7.8" stroke="#111" stroke-width="1.05" fill="none"/><rect x="4.5" y="3.5" width="1" height="1" fill="#2030d0"/><rect x="5" y="7" width="1" height="1" fill="#2030d0"/></svg>
<div class="t" style="left:41.5px;top:85.4px;font-size:7.2px;line-height:8px;color:#000;font-weight:normal;transform:scaleX(0.797);-webkit-text-stroke:0.25px #000;">curve1</div>
<svg class="a" style="left:24.5px;top:94.2px;" width="5" height="5" viewBox="0 0 5 5"><path d="M0.8,0.6 L4,2.5 L0.8,4.4 Z" fill="#fff" stroke="#777" stroke-width="0.8"/></svg>
<div class="a" style="left:29.5px;top:96.5px;width:0.9px;height:0.9px;background:#9ab"></div>
<svg class="a" style="left:31.5px;top:92.7px;" width="7" height="8" viewBox="0 0 7 8"><rect x="0" y="0.6" width="4.2" height="6.8" fill="#ffff30"/><path d="M0.5,7.2 L2.1,2.6 L3.7,6.6" stroke="#1a1a40" stroke-width="1.0" fill="none"/><path d="M6.8,1.2 C4.6,0.8 3.9,3.2 5.5,4.3 C7,5.2 6.6,7.2 4.8,7.8" stroke="#111" stroke-width="1.05" fill="none"/><rect x="4.5" y="3.5" width="1" height="1" fill="#2030d0"/><rect x="5" y="7" width="1" height="1" fill="#2030d0"/></svg>
<div class="t" style="left:41.5px;top:93.4px;font-size:7.2px;line-height:8px;color:#000;font-weight:normal;transform:scaleX(0.805);-webkit-text-stroke:0.25px #000;">curve10</div>
<svg class="a" style="left:24.5px;top:102.2px;" width="5" height="5" viewBox="0 0 5 5"><path d="M0.8,0.6 L4,2.5 L0.8,4.4 Z" fill="#fff" stroke="#777" stroke-width="0.8"/></svg>
<div class="a" style="left:29.5px;top:104.5px;width:0.9px;height:0.9px;background:#9ab"></div>
<svg class="a" style="left:31.5px;top:100.7px;" width="7" height="8" viewBox="0 0 7 8"><rect x="0" y="0.5" width="7" height="7" fill="#ffff30"/><path d="M0.7,7 L2.5,3.5 L3.8,5.2 L6.3,1.2" stroke="#111" stroke-width="1.1" fill="none"/><path d="M1.6,5.6 L2.4,4.2" stroke="#2030d0" stroke-width="0.8"/></svg>
<div class="t" style="left:41.5px;top:101.4px;font-size:7.2px;line-height:8px;color:#000;font-weight:normal;transform:scaleX(0.748);-webkit-text-stroke:0.25px #000;">mc6_side</div>
<svg class="a" style="left:24.5px;top:110.2px;" width="5" height="5" viewBox="0 0 5 5"><path d="M0.8,0.6 L4,2.5 L0.8,4.4 Z" fill="#fff" stroke="#777" stroke-width="0.8"/></svg>
<div class="a" style="left:29.5px;top:112.5px;width:0.9px;height:0.9px;background:#9ab"></div>
<svg class="a" style="left:31.5px;top:108.7px;" width="7" height="8" viewBox="0 0 7 8"><rect x="0" y="0.6" width="4.2" height="6.8" fill="#ffff30"/><path d="M0.5,7.2 L2.1,2.6 L3.7,6.6" stroke="#1a1a40" stroke-width="1.0" fill="none"/><path d="M6.8,1.2 C4.6,0.8 3.9,3.2 5.5,4.3 C7,5.2 6.6,7.2 4.8,7.8" stroke="#111" stroke-width="1.05" fill="none"/><rect x="4.5" y="3.5" width="1" height="1" fill="#2030d0"/><rect x="5" y="7" width="1" height="1" fill="#2030d0"/></svg>
<div class="t" style="left:41.5px;top:109.4px;font-size:7.2px;line-height:8px;color:#000;font-weight:normal;transform:scaleX(0.805);-webkit-text-stroke:0.25px #000;">curve12</div>
<svg class="a" style="left:24.5px;top:118.2px;" width="5" height="5" viewBox="0 0 5 5"><path d="M0.8,0.6 L4,2.5 L0.8,4.4 Z" fill="#fff" stroke="#777" stroke-width="0.8"/></svg>
<div class="a" style="left:29.5px;top:120.5px;width:0.9px;height:0.9px;background:#9ab"></div>
<svg class="a" style="left:31.5px;top:116.7px;" width="7" height="8" viewBox="0 0 7 8"><rect x="0" y="0.6" width="4.2" height="6.8" fill="#ffff30"/><path d="M0.5,7.2 L2.1,2.6 L3.7,6.6" stroke="#1a1a40" stroke-width="1.0" fill="none"/><path d="M6.8,1.2 C4.6,0.8 3.9,3.2 5.5,4.3 C7,5.2 6.6,7.2 4.8,7.8" stroke="#111" stroke-width="1.05" fill="none"/><rect x="4.5" y="3.5" width="1" height="1" fill="#2030d0"/><rect x="5" y="7" width="1" height="1" fill="#2030d0"/></svg>
<div class="t" style="left:41.5px;top:117.4px;font-size:7.2px;line-height:8px;color:#000;font-weight:normal;transform:scaleX(0.805);-webkit-text-stroke:0.25px #000;">curve14</div>
<svg class="a" style="left:24.5px;top:126.19999999999999px;" width="5" height="5" viewBox="0 0 5 5"><path d="M0.8,0.6 L4,2.5 L0.8,4.4 Z" fill="#fff" stroke="#777" stroke-width="0.8"/></svg>
<div class="a" style="left:29.5px;top:128.5px;width:0.9px;height:0.9px;background:#9ab"></div>
<svg class="a" style="left:31.5px;top:124.69999999999999px;" width="7" height="8" viewBox="0 0 7 8"><rect x="0" y="0.6" width="4.2" height="6.8" fill="#ffff30"/><path d="M0.5,7.2 L2.1,2.6 L3.7,6.6" stroke="#1a1a40" stroke-width="1.0" fill="none"/><path d="M6.8,1.2 C4.6,0.8 3.9,3.2 5.5,4.3 C7,5.2 6.6,7.2 4.8,7.8" stroke="#111" stroke-width="1.05" fill="none"/><rect x="4.5" y="3.5" width="1" height="1" fill="#2030d0"/><rect x="5" y="7" width="1" height="1" fill="#2030d0"/></svg>
<div class="t" style="left:41.5px;top:125.39999999999999px;font-size:7.2px;line-height:8px;color:#000;font-weight:normal;transform:scaleX(0.805);-webkit-text-stroke:0.25px #000;">curve15</div>
<svg class="a" style="left:24.5px;top:134.2px;" width="5" height="5" viewBox="0 0 5 5"><path d="M0.8,0.6 L4,2.5 L0.8,4.4 Z" fill="#fff" stroke="#777" stroke-width="0.8"/></svg>
<div class="a" style="left:29.5px;top:136.5px;width:0.9px;height:0.9px;background:#9ab"></div>
<svg class="a" style="left:31.5px;top:132.7px;" width="7" height="8" viewBox="0 0 7 8"><rect x="0" y="0.6" width="4.2" height="6.8" fill="#ffff30"/><path d="M0.5,7.2 L2.1,2.6 L3.7,6.6" stroke="#1a1a40" stroke-width="1.0" fill="none"/><path d="M6.8,1.2 C4.6,0.8 3.9,3.2 5.5,4.3 C7,5.2 6.6,7.2 4.8,7.8" stroke="#111" stroke-width="1.05" fill="none"/><rect x="4.5" y="3.5" width="1" height="1" fill="#2030d0"/><rect x="5" y="7" width="1" height="1" fill="#2030d0"/></svg>
<div class="t" style="left:41.5px;top:133.39999999999998px;font-size:7.2px;line-height:8px;color:#000;font-weight:normal;transform:scaleX(0.805);-webkit-text-stroke:0.25px #000;">curve16</div>
<svg class="a" style="left:24.5px;top:142.2px;" width="5" height="5" viewBox="0 0 5 5"><path d="M0.8,0.6 L4,2.5 L0.8,4.4 Z" fill="#fff" stroke="#777" stroke-width="0.8"/></svg>
<div class="a" style="left:29.5px;top:144.5px;width:0.9px;height:0.9px;background:#9ab"></div>
<svg class="a" style="left:31.5px;top:140.7px;" width="7" height="8" viewBox="0 0 7 8"><rect x="0" y="0.6" width="4.2" height="6.8" fill="#ffff30"/><path d="M0.5,7.2 L2.1,2.6 L3.7,6.6" stroke="#1a1a40" stroke-width="1.0" fill="none"/><path d="M6.8,1.2 C4.6,0.8 3.9,3.2 5.5,4.3 C7,5.2 6.6,7.2 4.8,7.8" stroke="#111" stroke-width="1.05" fill="none"/><rect x="4.5" y="3.5" width="1" height="1" fill="#2030d0"/><rect x="5" y="7" width="1" height="1" fill="#2030d0"/></svg>
<div class="t" style="left:41.5px;top:141.39999999999998px;font-size:7.2px;line-height:8px;color:#000;font-weight:normal;transform:scaleX(0.805);-webkit-text-stroke:0.25px #000;">curve17</div>
<svg class="a" style="left:24.5px;top:150.2px;" width="5" height="5" viewBox="0 0 5 5"><path d="M0.8,0.6 L4,2.5 L0.8,4.4 Z" fill="#fff" stroke="#777" stroke-width="0.8"/></svg>
<div class="a" style="left:29.5px;top:152.5px;width:0.9px;height:0.9px;background:#9ab"></div>
<svg class="a" style="left:31.5px;top:148.7px;" width="7" height="8" viewBox="0 0 7 8"><rect x="0" y="0.6" width="4.2" height="6.8" fill="#ffff30"/><path d="M0.5,7.2 L2.1,2.6 L3.7,6.6" stroke="#1a1a40" stroke-width="1.0" fill="none"/><path d="M6.8,1.2 C4.6,0.8 3.9,3.2 5.5,4.3 C7,5.2 6.6,7.2 4.8,7.8" stroke="#111" stroke-width="1.05" fill="none"/><rect x="4.5" y="3.5" width="1" height="1" fill="#2030d0"/><rect x="5" y="7" width="1" height="1" fill="#2030d0"/></svg>
<div class="t" style="left:41.5px;top:149.39999999999998px;font-size:7.2px;line-height:8px;color:#000;font-weight:normal;transform:scaleX(0.805);-webkit-text-stroke:0.25px #000;">curve18</div>
<svg class="a" style="left:24.5px;top:158.2px;" width="5" height="5" viewBox="0 0 5 5"><path d="M0.8,0.6 L4,2.5 L0.8,4.4 Z" fill="#fff" stroke="#777" stroke-width="0.8"/></svg>
<div class="a" style="left:29.5px;top:160.5px;width:0.9px;height:0.9px;background:#9ab"></div>
<svg class="a" style="left:31.5px;top:156.7px;" width="7" height="8" viewBox="0 0 7 8"><rect x="0" y="0.6" width="4.2" height="6.8" fill="#ffff30"/><path d="M0.5,7.2 L2.1,2.6 L3.7,6.6" stroke="#1a1a40" stroke-width="1.0" fill="none"/><path d="M6.8,1.2 C4.6,0.8 3.9,3.2 5.5,4.3 C7,5.2 6.6,7.2 4.8,7.8" stroke="#111" stroke-width="1.05" fill="none"/><rect x="4.5" y="3.5" width="1" height="1" fill="#2030d0"/><rect x="5" y="7" width="1" height="1" fill="#2030d0"/></svg>
<div class="t" style="left:41.5px;top:157.39999999999998px;font-size:7.2px;line-height:8px;color:#000;font-weight:normal;transform:scaleX(0.805);-webkit-text-stroke:0.25px #000;">curve19</div>
<svg class="a" style="left:24.5px;top:166.2px;" width="5" height="5" viewBox="0 0 5 5"><path d="M0.8,0.6 L4,2.5 L0.8,4.4 Z" fill="#fff" stroke="#777" stroke-width="0.8"/></svg>
<div class="a" style="left:29.5px;top:168.5px;width:0.9px;height:0.9px;background:#9ab"></div>
<svg class="a" style="left:31.5px;top:164.7px;" width="7" height="8" viewBox="0 0 7 8"><rect x="0" y="0.6" width="4.2" height="6.8" fill="#ffff30"/><path d="M0.5,7.2 L2.1,2.6 L3.7,6.6" stroke="#1a1a40" stroke-width="1.0" fill="none"/><path d="M6.8,1.2 C4.6,0.8 3.9,3.2 5.5,4.3 C7,5.2 6.6,7.2 4.8,7.8" stroke="#111" stroke-width="1.05" fill="none"/><rect x="4.5" y="3.5" width="1" height="1" fill="#2030d0"/><rect x="5" y="7" width="1" height="1" fill="#2030d0"/></svg>
<div class="t" style="left:41.5px;top:165.39999999999998px;font-size:7.2px;line-height:8px;color:#000;font-weight:normal;transform:scaleX(0.797);-webkit-text-stroke:0.25px #000;">curve2</div>
<svg class="a" style="left:24.5px;top:174.2px;" width="5" height="5" viewBox="0 0 5 5"><path d="M0.8,0.6 L4,2.5 L0.8,4.4 Z" fill="#fff" stroke="#777" stroke-width="0.8"/></svg>
<div class="a" style="left:29.5px;top:176.5px;width:0.9px;height:0.9px;background:#9ab"></div>
<svg class="a" style="left:31.5px;top:172.7px;" width="7" height="8" viewBox="0 0 7 8"><rect x="0" y="0.6" width="4.2" height="6.8" fill="#ffff30"/><path d="M0.5,7.2 L2.1,2.6 L3.7,6.6" stroke="#1a1a40" stroke-width="1.0" fill="none"/><path d="M6.8,1.2 C4.6,0.8 3.9,3.2 5.5,4.3 C7,5.2 6.6,7.2 4.8,7.8" stroke="#111" stroke-width="1.05" fill="none"/><rect x="4.5" y="3.5" width="1" height="1" fill="#2030d0"/><rect x="5" y="7" width="1" height="1" fill="#2030d0"/></svg>
<div class="t" style="left:41.5px;top:173.39999999999998px;font-size:7.2px;line-height:8px;color:#000;font-weight:normal;transform:scaleX(0.805);-webkit-text-stroke:0.25px #000;">curve20</div>
<svg class="a" style="left:24.5px;top:182.2px;" width="5" height="5" viewBox="0 0 5 5"><path d="M0.8,0.6 L4,2.5 L0.8,4.4 Z" fill="#fff" stroke="#777" stroke-width="0.8"/></svg>
<div class="a" style="left:29.5px;top:184.5px;width:0.9px;height:0.9px;background:#9ab"></div>
<svg class="a" style="left:31.5px;top:180.7px;" width="7" height="8" viewBox="0 0 7 8"><rect x="0" y="0.6" width="4.2" height="6.8" fill="#ffff30"/><path d="M0.5,7.2 L2.1,2.6 L3.7,6.6" stroke="#1a1a40" stroke-width="1.0" fill="none"/><path d="M6.8,1.2 C4.6,0.8 3.9,3.2 5.5,4.3 C7,5.2 6.6,7.2 4.8,7.8" stroke="#111" stroke-width="1.05" fill="none"/><rect x="4.5" y="3.5" width="1" height="1" fill="#2030d0"/><rect x="5" y="7" width="1" height="1" fill="#2030d0"/></svg>
<div class="t" style="left:41.5px;top:181.39999999999998px;font-size:7.2px;line-height:8px;color:#000;font-weight:normal;transform:scaleX(0.805);-webkit-text-stroke:0.25px #000;">curve21</div>
<svg class="a" style="left:24.5px;top:190.2px;" width="5" height="5" viewBox="0 0 5 5"><path d="M0.8,0.6 L4,2.5 L0.8,4.4 Z" fill="#fff" stroke="#777" stroke-width="0.8"/></svg>
<div class="a" style="left:29.5px;top:192.5px;width:0.9px;height:0.9px;background:#9ab"></div>
<svg class="a" style="left:31.5px;top:188.7px;" width="7" height="8" viewBox="0 0 7 8"><rect x="0" y="0.6" width="4.2" height="6.8" fill="#ffff30"/><path d="M0.5,7.2 L2.1,2.6 L3.7,6.6" stroke="#1a1a40" stroke-width="1.0" fill="none"/><path d="M6.8,1.2 C4.6,0.8 3.9,3.2 5.5,4.3 C7,5.2 6.6,7.2 4.8,7.8" stroke="#111" stroke-width="1.05" fill="none"/><rect x="4.5" y="3.5" width="1" height="1" fill="#2030d0"/><rect x="5" y="7" width="1" height="1" fill="#2030d0"/></svg>
<div class="t" style="left:41.5px;top:189.39999999999998px;font-size:7.2px;line-height:8px;color:#000;font-weight:normal;transform:scaleX(0.805);-webkit-text-stroke:0.25px #000;">curve22</div>
<svg class="a" style="left:24.5px;top:198.2px;" width="5" height="5" viewBox="0 0 5 5"><path d="M0.8,0.6 L4,2.5 L0.8,4.4 Z" fill="#fff" stroke="#777" stroke-width="0.8"/></svg>
<div class="a" style="left:29.5px;top:200.5px;width:0.9px;height:0.9px;background:#9ab"></div>
<svg class="a" style="left:31.5px;top:196.7px;" width="7" height="8" viewBox="0 0 7 8"><rect x="0" y="0.6" width="4.2" height="6.8" fill="#ffff30"/><path d="M0.5,7.2 L2.1,2.6 L3.7,6.6" stroke="#1a1a40" stroke-width="1.0" fill="none"/><path d="M6.8,1.2 C4.6,0.8 3.9,3.2 5.5,4.3 C7,5.2 6.6,7.2 4.8,7.8" stroke="#111" stroke-width="1.05" fill="none"/><rect x="4.5" y="3.5" width="1" height="1" fill="#2030d0"/><rect x="5" y="7" width="1" height="1" fill="#2030d0"/></svg>
<div class="t" style="left:41.5px;top:197.39999999999998px;font-size:7.2px;line-height:8px;color:#000;font-weight:normal;transform:scaleX(0.805);-webkit-text-stroke:0.25px #000;">curve23</div>
<svg class="a" style="left:24.5px;top:206.2px;" width="5" height="5" viewBox="0 0 5 5"><path d="M0.8,0.6 L4,2.5 L0.8,4.4 Z" fill="#fff" stroke="#777" stroke-width="0.8"/></svg>
<div class="a" style="left:29.5px;top:208.5px;width:0.9px;height:0.9px;background:#9ab"></div>
<svg class="a" style="left:31.5px;top:204.7px;" width="7" height="8" viewBox="0 0 7 8"><rect x="0" y="0.6" width="4.2" height="6.8" fill="#ffff30"/><path d="M0.5,7.2 L2.1,2.6 L3.7,6.6" stroke="#1a1a40" stroke-width="1.0" fill="none"/><path d="M6.8,1.2 C4.6,0.8 3.9,3.2 5.5,4.3 C7,5.2 6.6,7.2 4.8,7.8" stroke="#111" stroke-width="1.05" fill="none"/><rect x="4.5" y="3.5" width="1" height="1" fill="#2030d0"/><rect x="5" y="7" width="1" height="1" fill="#2030d0"/></svg>
<div class="t" style="left:41.5px;top:205.39999999999998px;font-size:7.2px;line-height:8px;color:#000;font-weight:normal;transform:scaleX(0.805);-webkit-text-stroke:0.25px #000;">curve24</div>
<svg class="a" style="left:24.5px;top:214.2px;" width="5" height="5" viewBox="0 0 5 5"><path d="M0.8,0.6 L4,2.5 L0.8,4.4 Z" fill="#fff" stroke="#777" stroke-width="0.8"/></svg>
<div class="a" style="left:29.5px;top:216.5px;width:0.9px;height:0.9px;background:#9ab"></div>
<svg class="a" style="left:31.5px;top:212.7px;" width="7" height="8" viewBox="0 0 7 8"><rect x="0" y="0.6" width="4.2" height="6.8" fill="#ffff30"/><path d="M0.5,7.2 L2.1,2.6 L3.7,6.6" stroke="#1a1a40" stroke-width="1.0" fill="none"/><path d="M6.8,1.2 C4.6,0.8 3.9,3.2 5.5,4.3 C7,5.2 6.6,7.2 4.8,7.8" stroke="#111" stroke-width="1.05" fill="none"/><rect x="4.5" y="3.5" width="1" height="1" fill="#2030d0"/><rect x="5" y="7" width="1" height="1" fill="#2030d0"/></svg>
<div class="t" style="left:41.5px;top:213.39999999999998px;font-size:7.2px;line-height:8px;color:#000;font-weight:normal;transform:scaleX(0.805);-webkit-text-stroke:0.25px #000;">curve25</div>
<svg class="a" style="left:24.5px;top:222.2px;" width="5" height="5" viewBox="0 0 5 5"><path d="M0.8,0.6 L4,2.5 L0.8,4.4 Z" fill="#fff" stroke="#777" stroke-width="0.8"/></svg>
<div class="a" style="left:29.5px;top:224.5px;width:0.9px;height:0.9px;background:#9ab"></div>
<svg class="a" style="left:31.5px;top:220.7px;" width="7" height="8" viewBox="0 0 7 8"><rect x="0" y="0.6" width="4.2" height="6.8" fill="#ffff30"/><path d="M0.5,7.2 L2.1,2.6 L3.7,6.6" stroke="#1a1a40" stroke-width="1.0" fill="none"/><path d="M6.8,1.2 C4.6,0.8 3.9,3.2 5.5,4.3 C7,5.2 6.6,7.2 4.8,7.8" stroke="#111" stroke-width="1.05" fill="none"/><rect x="4.5" y="3.5" width="1" height="1" fill="#2030d0"/><rect x="5" y="7" width="1" height="1" fill="#2030d0"/></svg>
<div class="t" style="left:41.5px;top:221.39999999999998px;font-size:7.2px;line-height:8px;color:#000;font-weight:normal;transform:scaleX(0.805);-webkit-text-stroke:0.25px #000;">curve26</div>
<div class="a" style="left:1.5px;top:226.2px;width:112px;height:2.8px;background:#f0f0f0"></div>
<div class="a" style="left:101.7px;top:68px;width:0.9px;height:158px;background:#dedede"></div>
<div class="a" style="left:102.6px;top:68px;width:9px;height:158px;background:linear-gradient(90deg,#f2f2f2,#f8f8f8 50%,#eeeeee)"></div>
<div class="a" style="left:111.4px;top:68px;width:0.9px;height:158px;background:#d6d6d6"></div>
<svg class="a" style="left:103.5px;top:71px;" width="6" height="3" viewBox="0 0 6 3"><path d="M0.5,2.8 L3,0.3 L5.5,2.8 Z" fill="#222"/></svg>
<div class="a" style="left:101.8px;top:81.3px;width:7.2px;height:32px;border:1px solid #7c7c7c;border-radius:1.5px;background:linear-gradient(90deg,#e8e8e8,#d8d8d8)"></div>
<div class="a" style="left:103.6px;top:95.5px;width:3.6px;height:4px;border:0.8px solid #444;background:#fff"></div>
<svg class="a" style="left:103.5px;top:221.5px;" width="6" height="3" viewBox="0 0 6 3"><path d="M0.5,0.3 L3,2.8 L5.5,0.3 Z" fill="#222"/></svg>
<div class="a" style="left:1px;top:229.4px;width:113px;height:8.2px;background:linear-gradient(#cddae7,#c2d0df)"></div>
<div class="t" style="left:2.3px;top:231.20000000000002px;font-size:7.4px;line-height:8px;color:#000;font-weight:normal;transform:scaleX(0.801);-webkit-text-stroke:0.25px #000;">Properties</div>
<svg class="a" style="left:105.5px;top:230.70000000000002px;" width="6" height="6" viewBox="0 0 6 6"><path d="M0.8,0.8 L5.2,5.2 M5.2,0.8 L0.8,5.2" stroke="#111" stroke-width="1.5"/></svg>
<div class="a" style="left:0px;top:238.8px;width:113px;height:1.1px;background:#151515"></div>
<div class="a" style="left:1.5px;top:240.6px;width:112px;height:8px;background:linear-gradient(#fff,#ededed);border-bottom:1px solid #707070"></div>
<div class="a" style="left:3px;top:241.5px;width:100px;height:6px;background:#eaeaea"></div>
<svg class="a" style="left:104.5px;top:240.8px;" width="8" height="8" viewBox="0 0 8 8"><circle cx="3" cy="2.5" r="2" fill="#ee2" stroke="#111" stroke-width="0.8"/><path d="M3,4.5 v3" stroke="#111" stroke-width="1"/><path d="M7,0.5 v7.5" stroke="#222" stroke-width="0.9"/></svg>
<div class="a" style="left:1.5px;top:249.5px;width:112px;height:139.5px;background:#efefef"></div>
<div class="a" style="left:1.6px;top:249.5px;width:1.2px;height:139.5px;background:#fff"></div>
<div class="a" style="left:3.2px;top:249.5px;width:1px;height:139.5px;background:#e4e4e4"></div>
<div class="a" style="left:1px;top:390.6px;width:113px;height:8.2px;background:linear-gradient(#cddae7,#c2d0df)"></div>
<div class="t" style="left:2.3px;top:392.40000000000003px;font-size:7.4px;line-height:8px;color:#000;font-weight:normal;transform:scaleX(0.780);-webkit-text-stroke:0.25px #000;">Selection Set</div>
<svg class="a" style="left:105.5px;top:391.90000000000003px;" width="6" height="6" viewBox="0 0 6 6"><path d="M0.8,0.8 L5.2,5.2 M5.2,0.8 L0.8,5.2" stroke="#111" stroke-width="1.5"/></svg>
<div class="a" style="left:0px;top:399.90000000000003px;width:113px;height:1.1px;background:#151515"></div>
<div class="a" style="left:1.5px;top:401.2px;width:112px;height:112.8px;background:#f0f0f0"></div>
<div class="a" style="left:4px;top:402px;width:10.5px;height:9.6px;background:linear-gradient(#fdfdfd,#ececec);border:1px solid #333;border-radius:1.5px"></div>
<svg class="a" style="left:4.8px;top:402.3px" width="9" height="9" viewBox="0 0 10 10"><path d="M2,2 h6 M2,8 h6 M3,2 v6 M5,2 v6 M7,2 v6" stroke="#111" stroke-width="1"/><path d="M1,8 l1,1" stroke="#555"/></svg>
<div class="a" style="left:16px;top:402px;width:10.5px;height:9.6px;background:linear-gradient(#fdfdfd,#ececec);border:1px solid #9a9a9a;border-radius:1.5px"></div>
<svg class="a" style="left:16.8px;top:402.3px" width="9" height="9" viewBox="0 0 10 10"><path d="M5,1.5 L8,5 H6 V8.5 H4 V5 H2 Z" fill="#222"/></svg>
<div class="a" style="left:28px;top:402px;width:10.5px;height:9.6px;background:linear-gradient(#fdfdfd,#ececec);border:1px solid #9a9a9a;border-radius:1.5px"></div>
<svg class="a" style="left:28.8px;top:402.3px" width="9" height="9" viewBox="0 0 10 10"><path d="M5,8.5 L8,5 H6 V1.5 H4 V5 H2 Z" fill="#222"/></svg>
<div class="a" style="left:40px;top:402px;width:10.5px;height:9.6px;background:linear-gradient(#fdfdfd,#ececec);border:1px solid #9a9a9a;border-radius:1.5px"></div>
<svg class="a" style="left:40.8px;top:402.3px" width="9" height="9" viewBox="0 0 10 10"><path d="M1.5,1.5 L8.5,8.5 M8.5,1.5 L1.5,8.5" stroke="#c22" stroke-width="1.1"/></svg>
<div class="a" style="left:52px;top:402px;width:10.5px;height:9.6px;background:linear-gradient(#fdfdfd,#ececec);border:1px solid #9a9a9a;border-radius:1.5px"></div>
<svg class="a" style="left:52.8px;top:402.3px" width="9" height="9" viewBox="0 0 10 10"><rect x="0.5" y="0.5" width="9" height="9" fill="#dde3ff" stroke="#2a2acc" stroke-width="1"/><path d="M2,2 L8,8 M8,2 L2,8" stroke="#c22" stroke-width="1.1"/></svg>
<div class="t" style="left:64.5px;top:404.4px;font-size:7.0px;line-height:8px;color:#000;font-weight:normal;transform:scaleX(0.799);-webkit-text-stroke:0.25px #000;">0 Entities</div>
<div class="a" style="left:3.3px;top:413px;width:110px;height:93px;background:#fff;border:1px solid #b4b4b4"></div>
<div class="a" style="left:4.3px;top:414px;width:108.5px;height:11.3px;background:linear-gradient(#fff,#f1f1f1 50%,#e6e6e6);border-bottom:1px solid #a0a0a0"></div>
<div class="a" style="left:63px;top:414.5px;width:0.9px;height:10.5px;background:#b8b8b8"></div>
<div class="a" style="left:95px;top:414.5px;width:0.9px;height:10.5px;background:#b8b8b8"></div>
<div class="a" style="left:107px;top:414.5px;width:0.9px;height:10.5px;background:#b8b8b8"></div>
<div class="t" style="left:6.5px;top:416.8px;font-size:6.8px;line-height:8px;color:#000;font-weight:normal;transform:scaleX(0.854);-webkit-text-stroke:0.25px #000;">Name</div>
<div class="t" style="left:66.5px;top:416.8px;font-size:6.8px;line-height:8px;color:#000;font-weight:normal;transform:scaleX(0.847);-webkit-text-stroke:0.25px #000;">Type</div>
<div class="t" style="left:98px;top:416.8px;font-size:6.8px;line-height:8px;color:#000;font-weight:normal;transform:scaleX(0.756);-webkit-text-stroke:0.25px #000;">C...</div>
<div class="a" style="left:108.5px;top:418px;width:1.5px;height:4px;background:#c86a3a"></div>
<div class="a" style="left:3.3px;top:505.8px;width:110px;height:8.2px;background:#f2f2f2;border:1px solid #cfcfcf"></div>
<svg class="a" style="left:4.5px;top:507px;" width="5" height="6" viewBox="0 0 5 6"><path d="M1,3 L4,0.5 V5.5 Z" fill="#111"/></svg>
<div class="a" style="left:10.5px;top:506.3px;width:95px;height:7px;border:1px solid #7a7a7a;border-radius:1.5px;background:linear-gradient(#ececec,#d4d4d4)"></div>
<div class="a" style="left:55px;top:508px;width:4px;height:0.7px;background:#555"></div>
<div class="a" style="left:55px;top:509.5px;width:4px;height:0.7px;background:#555"></div>
<div class="a" style="left:55px;top:511px;width:4px;height:0.7px;background:#555"></div>
<svg class="a" style="left:107px;top:507px;" width="5" height="6" viewBox="0 0 5 6"><path d="M4,3 L1,0.5 V5.5 Z" fill="#111"/></svg>
<div class="a" style="left:113.3px;top:57px;width:0.8px;height:457px;background:#e8e8e8"></div>
<div class="a" style="left:116px;top:46px;width:583px;height:468px;background:#000"></div>
<svg class="a" style="left:116px;top:46px" width="583" height="468" viewBox="116 46 583 468"><path d="M200.50,69.20 C208.75,69.03 233.42,68.60 250.00,68.20 C266.58,67.80 276.67,67.40 300.00,66.80 C323.33,66.20 360.00,65.23 390.00,64.60 C420.00,63.97 450.00,63.50 480.00,63.00 C510.00,62.50 551.67,61.82 570.00,61.60 C588.33,61.38 584.50,61.57 590.00,61.70 C595.50,61.83 599.75,61.98 603.00,62.40 C606.25,62.82 607.83,63.40 609.50,64.20 C611.17,65.00 612.18,66.07 613.00,67.20 C613.82,68.33 614.13,69.28 614.40,71.00 C614.67,72.72 614.57,76.42 614.60,77.50" stroke="#14d6e0" stroke-width="1.4" fill="none"/><path d="M614.60,77.50 C614.20,78.92 613.63,82.25 612.20,86.00 C610.77,89.75 608.80,94.33 606.00,100.00 C603.20,105.67 598.63,114.50 595.40,120.00 C592.17,125.50 588.07,130.83 586.60,133.00" stroke="#14d6e0" stroke-width="1.3" fill="none"/><path d="M586.60,133.00 L574.30,253.00 L556.70,352.20" stroke="#14d6e0" stroke-width="1.3" fill="none"/><path d="M556.70,352.20 C556.63,354.33 556.48,361.20 556.30,365.00 C556.12,368.80 555.92,372.08 555.60,375.00 C555.28,377.92 554.83,380.75 554.40,382.50 C553.97,384.25 553.23,385.00 553.00,385.50" stroke="#14d6e0" stroke-width="1.3" fill="none"/><path d="M200.50,133.60 C204.75,133.67 216.42,133.73 226.00,134.00 C235.58,134.27 249.67,134.80 258.00,135.20 C266.33,135.60 269.83,135.95 276.00,136.40 C282.17,136.85 282.67,136.37 295.00,137.90 C307.33,139.43 334.17,142.92 350.00,145.60 C365.83,148.28 377.17,150.43 390.00,154.00 C402.83,157.57 417.00,163.08 427.00,167.00 C437.00,170.92 442.83,173.92 450.00,177.50 C457.17,181.08 463.10,183.85 470.00,188.50 C476.90,193.15 484.97,199.33 491.40,205.40 C497.83,211.47 503.45,218.23 508.60,224.90 C513.75,231.57 518.23,238.55 522.30,245.40 C526.37,252.25 530.07,258.90 533.00,266.00 C535.93,273.10 538.07,280.67 539.90,288.00 C541.73,295.33 542.78,301.83 544.00,310.00 C545.22,318.17 546.23,328.33 547.20,337.00 C548.17,345.67 549.13,355.33 549.80,362.00 C550.47,368.67 550.80,373.50 551.20,377.00 C551.60,380.50 551.90,381.58 552.20,383.00 C552.50,384.42 552.87,385.08 553.00,385.50" stroke="#14d6e0" stroke-width="1.3" fill="none"/><path d="M200.50,468.00 C212.08,464.90 248.08,455.30 270.00,449.40 C291.92,443.50 311.28,438.37 332.00,432.60 C352.72,426.83 373.57,421.63 394.30,414.80 C415.03,407.97 435.70,399.63 456.40,391.60 C477.10,383.57 501.80,373.08 518.50,366.60 C535.20,360.12 550.25,355.02 556.60,352.70" stroke="#14d6e0" stroke-width="1.3" fill="none"/><path d="M200.5,410 V499.5" stroke="#14d6e0" stroke-width="1.3"/><path d="M200.5,56 V512" stroke="#9a9a9a" stroke-width="1" stroke-dasharray="1 3"/><path d="M697.5,50 V512" stroke="#3a3a3a" stroke-width="1" stroke-dasharray="1 3"/><path d="M120,500 H698" stroke="#9a9a9a" stroke-width="1" stroke-dasharray="1 3"/><rect x="585.8" y="132.2" width="1.6" height="1.6" fill="#ee2"/><rect x="574.8" y="255.6" width="1.6" height="1.6" fill="#ee2"/><rect x="555.8" y="351.9" width="1.6" height="1.6" fill="#ee2"/><rect x="199.7" y="467.2" width="1.6" height="1.6" fill="#f80"/></svg>
<div class="t" style="left:200px;top:48.5px;font-size:7px;line-height:7px;color:#e8e8e8;font-weight:bold;transform:scaleX(1.285);">Z</div>
<div class="t" style="left:690.5px;top:501.5px;font-size:7px;line-height:7px;color:#e8e8e8;font-weight:bold;transform:scaleX(1.177);">Y</div>
<div class="t" style="left:614.5px;top:75.5px;font-size:6.6px;line-height:7px;color:#14d6e0;font-weight:bold;transform:scaleX(1.051);">vl_1</div>
<div class="t" style="left:587px;top:131.8px;font-size:6.6px;line-height:7px;color:#e8e830;font-weight:bold;transform:scaleX(1.055);">p61</div>
<div class="t" style="left:574px;top:249.8px;font-size:6.6px;line-height:7px;color:#14d6e0;font-weight:bold;transform:scaleX(1.048);">mc6_side</div>
<div class="t" style="left:576.5px;top:257.8px;font-size:6.6px;line-height:7px;color:#e8e830;font-weight:bold;transform:scaleX(1.055);">p62</div>
<div class="t" style="left:557px;top:352px;font-size:6.6px;line-height:7px;color:#e8e830;font-weight:bold;transform:scaleX(1.099);">p63</div>
<div class="t" style="left:551.5px;top:368.2px;font-size:6.6px;line-height:7px;color:#14d6e0;font-weight:bold;transform:scaleX(0.973);">vl_3</div>
<div class="t" style="left:386px;top:416.5px;font-size:6.6px;line-height:7px;color:#14d6e0;font-weight:bold;transform:scaleX(1.014);">mc6_bot</div>
<div class="t" style="left:393.5px;top:422.5px;font-size:6.6px;line-height:7px;color:#e8e830;font-weight:bold;transform:scaleX(1.143);">p64</div>
<div class="t" style="left:201px;top:468.5px;font-size:6.6px;line-height:7px;color:#e8e830;font-weight:bold;transform:scaleX(1.011);">p65</div>
<div class="t" style="left:200px;top:501.2px;font-size:6.6px;line-height:7px;color:#f0f0f0;font-weight:bold;transform:scaleX(1.498);">x</div>
<div class="t" style="left:205px;top:501px;font-size:6.6px;line-height:7px;color:#14d6e0;font-weight:bold;transform:scaleX(1.036);">l_5</div>
<div class="a" style="left:0px;top:514px;width:700px;height:11px;background:linear-gradient(#fafafa 0,#fafafa 2px,#efefef 2px,#ebebeb 8px,#f6f6f6 8px,#f6f6f6 9.3px,#98a2b0 9.3px)"></div>
<div class="a" style="left:336px;top:516px;width:139.5px;height:7px;border-top:1px solid #8e8e8e;border-left:1px solid #a0a0a0;background:linear-gradient(#f6f6f6,#ececec)"></div>
<div class="a" style="left:476px;top:516px;width:47.5px;height:7px;border-top:1px solid #8e8e8e;border-left:1px solid #a0a0a0;background:linear-gradient(#f6f6f6,#ececec)"></div>
<div class="a" style="left:524px;top:516px;width:37.5px;height:7px;border-top:1px solid #8e8e8e;border-left:1px solid #a0a0a0;background:linear-gradient(#f6f6f6,#ececec)"></div>
<div class="a" style="left:562px;top:516px;width:38px;height:7px;border-top:1px solid #8e8e8e;border-left:1px solid #a0a0a0;background:linear-gradient(#f6f6f6,#ececec)"></div>
<div class="a" style="left:600.5px;top:516px;width:53.0px;height:7px;border-top:1px solid #8e8e8e;border-left:1px solid #a0a0a0;background:linear-gradient(#f6f6f6,#ececec)"></div>
<div class="a" style="left:654px;top:516px;width:45px;height:7px;border-top:1px solid #8e8e8e;border-left:1px solid #a0a0a0;background:linear-gradient(#f6f6f6,#ececec)"></div>
<div class="t" style="left:338px;top:516.6px;font-size:6.5px;line-height:7px;color:#000;font-weight:normal;transform:scaleX(0.968);-webkit-text-stroke:0.25px #000;">L0</div>
<div class="t" style="left:525.5px;top:516.6px;font-size:6.5px;line-height:7px;color:#000;font-weight:normal;transform:scaleX(0.855);-webkit-text-stroke:0.25px #000;">Lat 0.0</div>
<div class="t" style="left:563px;top:516.6px;font-size:6.5px;line-height:7px;color:#000;font-weight:normal;transform:scaleX(0.899);-webkit-text-stroke:0.25px #000;">Lon 180.0</div>
<div class="t" style="left:602px;top:516.6px;font-size:6.5px;line-height:7px;color:#000;font-weight:normal;transform:scaleX(0.877);-webkit-text-stroke:0.25px #000;">Radius 2.11</div>
<div class="t" style="left:655px;top:516.6px;font-size:6.5px;line-height:7px;color:#000;font-weight:normal;transform:scaleX(0.934);-webkit-text-stroke:0.25px #000;">Tilt 0.0</div>
<div class="a" style="left:699px;top:0px;width:1px;height:525px;background:#d0d8e4"></div>
</body></html>
